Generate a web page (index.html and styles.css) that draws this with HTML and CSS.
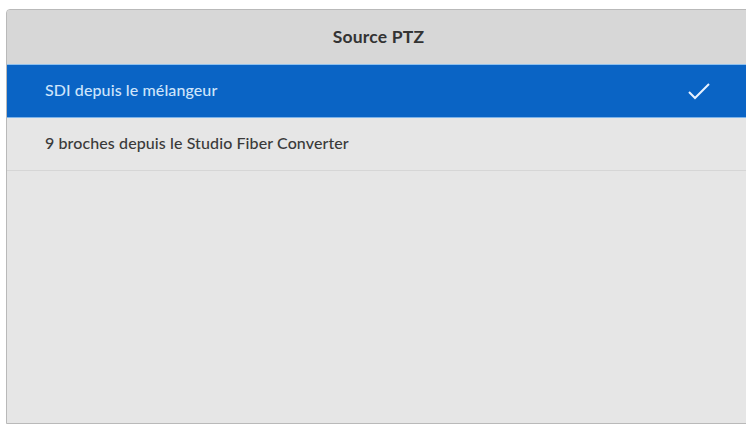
FILE: index.html
```html
<!DOCTYPE html>
<html lang="fr">
<head>
<meta charset="utf-8">
<link rel="stylesheet" href="styles.css">
</head>
<body>
<div class="panel">
  <div class="header">Source PTZ</div>
  <div class="row selected">
    <span class="label">SDI depuis le mélangeur</span>
    <svg class="check" width="24" height="18" viewBox="0 0 24 18"><path d="M2 10 L8 16 L22 2" fill="none" stroke="#e8f2ff" stroke-width="2"/></svg>
  </div>
  <div class="row">
    <span class="label">9 broches depuis le Studio Fiber Converter</span>
  </div>
</div>
</body>
</html>
```
FILE: styles.css
```css
html, body {
  margin: 0;
  padding: 0;
  background: #ffffff;
  overflow: hidden;
}
body {
  width: 746px;
  height: 426px;
  font-family: Lato, "Open Sans", sans-serif;
}
.panel {
  margin: 9px 0 0 6px;
  width: 745px;
  height: 415px;
  box-sizing: border-box;
  border: 1px solid #b9b9b9;
  border-radius: 4px 0 0 0;
  background: #e6e6e6;
  overflow: hidden;
}
.header {
  height: 55px;
  background: #d7d7d7;
  display: flex;
  align-items: center;
  justify-content: center;
  font-weight: bold;
  font-size: 17.5px;
  letter-spacing: 0.2px;
  color: #333333;
  border-bottom: 1px solid #8ec0ee;
  box-sizing: border-box;
  padding-bottom: 2px;
}
.row {
  height: 53px;
  display: flex;
  align-items: center;
  justify-content: space-between;
  padding: 0 39px 0 38px;
  box-sizing: border-box;
  border-bottom: 1px solid #d6d6d6;
  font-size: 16px;
  letter-spacing: 0.1px;
  font-weight: 500;
  color: #3a3a3a;
}
.row .label {
  padding-bottom: 3px;
}
.row.selected {
  background: #0a64c5;
  color: #cfe4fb;
  border-bottom: 1px solid #7eb4ea;
}
.check {
  display: block;
}
```
